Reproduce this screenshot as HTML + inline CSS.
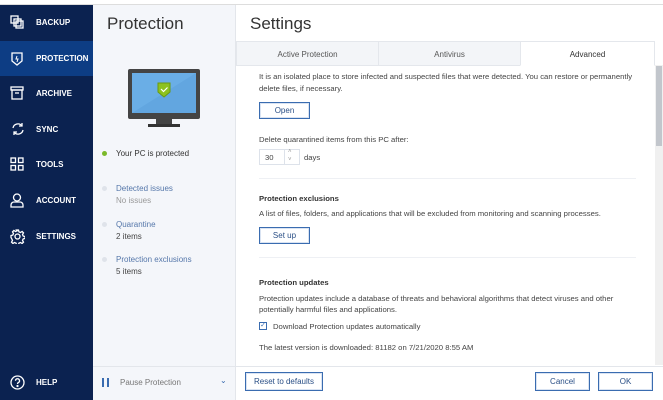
<!DOCTYPE html><html><head><style>
*{margin:0;padding:0;box-sizing:border-box}
body{width:663px;height:400px;overflow:hidden;font-family:"Liberation Sans",sans-serif;background:#fff;position:relative;font-size:8px;color:#333}
.abs{position:absolute}
#top{left:0;top:0;width:663px;height:5px;background:#fff;border-bottom:1px solid #ddd}
#side{left:0;top:5px;width:93px;height:395px;background:#0b2250}
.nav{position:absolute;left:0;width:93px;height:35px;color:#fff;font-weight:bold;font-size:8px;line-height:35px;padding-left:36px}
.nav svg{position:absolute;left:10px;top:10px}
#mid{left:93px;top:5px;width:143px;height:395px;background:#f4f6fa;border-right:1px solid #e3e6eb}
#right{left:236px;top:5px;width:427px;height:395px;background:#fff}
h1{font-weight:normal;font-size:17px;color:#333;position:absolute}
.tab{position:absolute;top:36px;height:25px;line-height:25px;text-align:center;font-size:8px;color:#555;background:#f3f5f8;border:1px solid #e4e7ec}
.btn{position:absolute;border:1px solid #3a6cb0;background:#fff;color:#2a4f86;font-size:8px;text-align:center;box-shadow:inset 0 0 0 1px #d9e3f2}
.t{position:absolute;font-size:8px;color:#444;white-space:nowrap}
#right .t{font-size:7.7px}
.b{font-weight:bold;color:#333}
.dot{position:absolute;width:5px;height:5px;border-radius:50%;background:#dfe3ea}
.lnk{color:#5577aa}
.gr{color:#999}
</style></head><body>
<div class="abs" id="top"></div>
<div class="abs" id="side">
<div class="nav" style="top:0">BACKUP<svg width="14" height="14" viewBox="0 0 14 14" fill="none" stroke="#fff" stroke-width="1.3"><rect x="1" y="1" width="7" height="7"/><rect x="4" y="4" width="7" height="7"/><rect x="6" y="6" width="7" height="7"/></svg></div>
<div class="nav" style="top:36px;background:#0d3d84">PROTECTION<svg width="14" height="16" viewBox="0 0 14 16" fill="none" stroke="#fff" stroke-width="1.3"><path d="M2 2h10v8l-5 4-5-4z"/><path d="M7 5l-1 3h2l-1 3" stroke-width="1"/></svg></div>
<div class="nav" style="top:71px">ARCHIVE<svg width="14" height="14" viewBox="0 0 14 14" fill="none" stroke="#fff" stroke-width="1.3"><rect x="1" y="1" width="12" height="3"/><rect x="2" y="4" width="10" height="9"/><path d="M5 7h4"/></svg></div>
<div class="nav" style="top:107px">SYNC<svg width="16" height="14" viewBox="0 0 16 14" fill="none" stroke="#fff" stroke-width="1.3"><path d="M3 6a5 5 0 0 1 9-2M13 8a5 5 0 0 1-9 2"/><path d="M12 1v3h-3M4 13v-3h3"/></svg></div>
<div class="nav" style="top:142px">TOOLS<svg width="14" height="14" viewBox="0 0 14 14" fill="none" stroke="#fff" stroke-width="1.3"><rect x="1" y="1" width="4.5" height="4.5"/><rect x="8.5" y="1" width="4.5" height="4.5"/><rect x="1" y="8.5" width="4.5" height="4.5"/><rect x="8.5" y="8.5" width="4.5" height="4.5"/></svg></div>
<div class="nav" style="top:178px">ACCOUNT<svg width="14" height="15" viewBox="0 0 14 15" fill="none" stroke="#fff" stroke-width="1.3"><circle cx="7" cy="4.5" r="3.5"/><path d="M1 14v-2a3 3 0 0 1 3-3h6a3 3 0 0 1 3 3v2z"/></svg></div>
<div class="nav" style="top:214px">SETTINGS<svg width="15" height="15" viewBox="0 0 15 15" fill="none" stroke="#fff" stroke-width="1.3"><circle cx="7.5" cy="7.5" r="2.5"/><path d="M6.5 1h2l.4 1.8 1.6.7 1.6-1 1.4 1.4-1 1.6.7 1.6 1.8.4v2l-1.8.4-.7 1.6 1 1.6-1.4 1.4-1.6-1-1.6.7-.4 1.8h-2l-.4-1.8-1.6-.7-1.600 1-1.4-1.4 1-1.6-.7-1.6L1 8.5v-2l1.8-.4.7-1.6-1-1.6 1.4-1.4 1.6 1 1.6-.7z"/></svg></div>
<div class="nav" style="top:360px">HELP<svg width="15" height="15" viewBox="0 0 15 15" fill="none" stroke="#fff" stroke-width="1.3"><circle cx="7.5" cy="7.5" r="6.5"/><path d="M5.5 5.8a2 2 0 1 1 2.8 1.8c-.6.3-.8.7-.8 1.4"/><circle cx="7.5" cy="11" r=".5" fill="#fff"/></svg></div>
</div>
<div class="abs" id="mid">
<h1 style="left:14px;top:9px">Protection</h1>
<svg class="abs" style="left:35px;top:64px" width="74" height="60" viewBox="0 0 74 60"><rect x="0" y="0" width="72" height="50" rx="2" fill="#444"/><rect x="4" y="4" width="64" height="40" fill="#6aaee6"/><path d="M4 44L68 4v40z" fill="#62a6e0"/><rect x="28" y="50" width="16" height="5" fill="#444"/><rect x="20" y="55" width="32" height="3" fill="#333"/><path d="M30 14h12v9l-6 5-6-5z" fill="#8dc21f" stroke="#6a9a10"/><path d="M33 20l2.5 2.5 4-4" stroke="#fff" stroke-width="1.2" fill="none"/></svg>
<div class="dot" style="left:9px;top:146px;background:#7ab929"></div>
<div class="t b" style="left:23px;top:144px;font-weight:normal;color:#333">Your PC is protected</div>
<div class="dot" style="left:9px;top:181px"></div>
<div class="t lnk" style="left:23px;top:179px">Detected issues</div>
<div class="t gr" style="left:23px;top:191px">No issues</div>
<div class="dot" style="left:9px;top:217px"></div>
<div class="t lnk" style="left:23px;top:215px">Quarantine</div>
<div class="t" style="left:23px;top:227px">2 items</div>
<div class="dot" style="left:9px;top:252px"></div>
<div class="t lnk" style="left:23px;top:250px">Protection exclusions</div>
<div class="t" style="left:23px;top:262px">5 items</div>
<div class="abs" style="left:0;top:361px;width:143px;height:34px;border-top:1px solid #e3e6eb"></div>
<div class="abs" style="left:9px;top:373px;width:2px;height:9px;background:#3a6cb0"></div>
<div class="abs" style="left:14px;top:373px;width:2px;height:9px;background:#3a6cb0"></div>
<div class="t gr" style="left:27px;top:373px;color:#777">Pause Protection</div>
<div class="t" style="left:127px;top:371px;color:#3a6cb0">&#8964;</div>
</div>
<div class="abs" id="right">
<h1 style="left:14px;top:9px">Settings</h1>
<div class="tab" style="left:0;width:143px">Active Protection</div>
<div class="tab" style="left:142px;width:143px">Antivirus</div>
<div class="tab" style="left:284px;width:135px;background:#fff;border-bottom-color:#fff;color:#333">Advanced</div>
<div class="abs" style="left:419px;top:60px;width:8px;height:300px;background:#f0f0f0"></div>
<div class="abs" style="left:420px;top:61px;width:6px;height:80px;background:#c2c6cc"></div>
<div class="t" style="left:23px;top:67px">It is an isolated place to store infected and suspected files that were detected. You can restore or permanently</div>
<div class="t" style="left:23px;top:79px">delete files, if necessary.</div>
<div class="btn" style="left:23px;top:97px;width:51px;height:17px;line-height:15px">Open</div>
<div class="t" style="left:23px;top:130px">Delete quarantined items from this PC after:</div>
<div class="abs" style="left:23px;top:144px;width:41px;height:16px;border:1px solid #dde2ea"></div>
<div class="abs" style="left:48px;top:144px;width:1px;height:16px;background:#dde2ea"></div>
<div class="t" style="left:29px;top:148px">30</div>
<div class="t gr" style="left:52px;top:144px;font-size:6px">&#708;</div>
<div class="t gr" style="left:52px;top:152px;font-size:6px">&#709;</div>
<div class="t" style="left:68px;top:148px">days</div>
<div class="abs" style="left:23px;top:173px;width:377px;height:1px;background:#eef0f4"></div>
<div class="t b" style="left:23px;top:189px">Protection exclusions</div>
<div class="t" style="left:23px;top:204px">A list of files, folders, and applications that will be excluded from monitoring and scanning processes.</div>
<div class="btn" style="left:23px;top:222px;width:51px;height:17px;line-height:15px">Set up</div>
<div class="abs" style="left:23px;top:252px;width:377px;height:1px;background:#eef0f4"></div>
<div class="t b" style="left:23px;top:273px">Protection updates</div>
<div class="t" style="left:23px;top:289px">Protection updates include a database of threats and behavioral algorithms that detect viruses and other</div>
<div class="t" style="left:23px;top:300px">potentially harmful files and applications.</div>
<div class="abs" style="left:23px;top:317px;width:8px;height:8px;border:1px solid #3a6cb0;color:#3a6cb0;font-size:7px;line-height:6px;text-align:center">&#10003;</div>
<div class="t" style="left:37px;top:317px">Download Protection updates automatically</div>
<div class="t" style="left:23px;top:338px">The latest version is downloaded: 81182 on 7/21/2020 8:55 AM</div>
<div class="abs" style="left:0;top:361px;width:427px;height:1px;background:#e3e6eb"></div>
<div class="btn" style="left:9px;top:367px;width:78px;height:19px;line-height:17px">Reset to defaults</div>
<div class="btn" style="left:299px;top:367px;width:55px;height:19px;line-height:17px">Cancel</div>
<div class="btn" style="left:362px;top:367px;width:55px;height:19px;line-height:17px">OK</div>
</div>
</body></html>
